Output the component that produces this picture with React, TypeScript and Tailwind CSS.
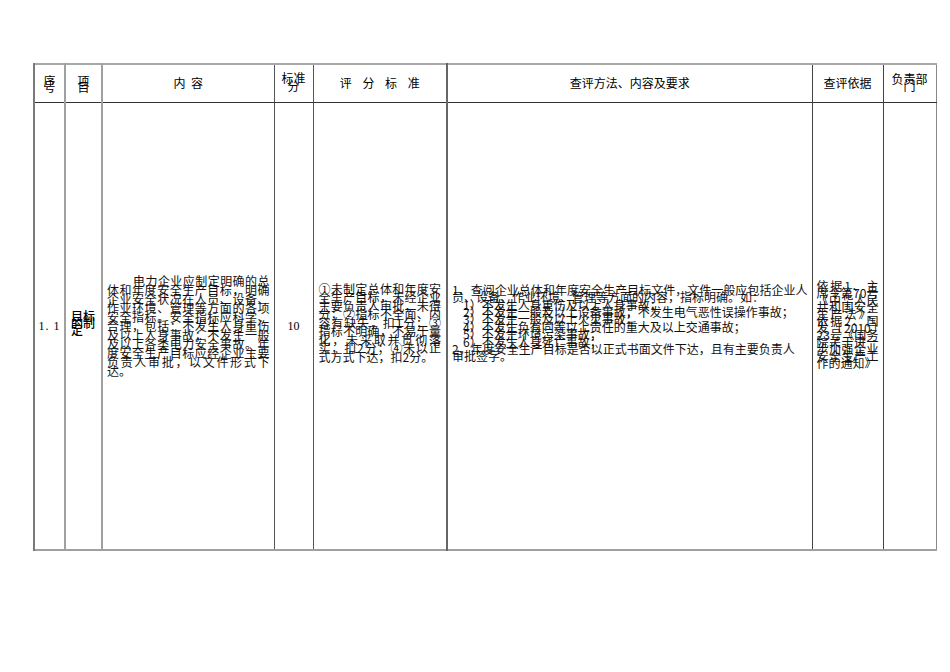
import React from "react";

const cjk = { fontFamily: '"Noto Sans CJK SC", "Noto Sans", sans-serif' };
const serif = { fontFamily: '"Liberation Serif", "Noto Sans CJK SC", serif' };

const items = [
  "1）不发生人身重伤及以上人身事故；",
  "2）不发生一般及以上设备事故；不发生电气恶性误操作事故；",
  "3）不发生一般及以上火灾事故；",
  "4）不发生负有同等以上责任的重大及以上交通事故；",
  "5）不发生环境污染事故；",
  "6）不发生人身死亡事故；",
];

const App = () => {
  return (
    <div className="w-[950px] h-[672px] bg-white text-black" style={cjk}>
      <div className="pt-[63px] pl-[33px]">
        <table className="table-fixed border-collapse w-[902px]">
          <colgroup>
            <col className="w-[31px]" />
            <col className="w-[37px]" />
            <col className="w-[172px]" />
            <col className="w-[39px]" />
            <col className="w-[134px]" />
            <col className="w-[365px]" />
            <col className="w-[71px]" />
            <col className="w-[53px]" />
          </colgroup>
          <thead>
            <tr className="h-[38px] text-[12px] border-t-2 border-t-[#a8a8a8]">
              <th className="font-normal border-l-2 border-l-[#7a7a7a] border-b border-b-[#333] align-middle">
                <div className="w-[13px] mx-auto leading-[6px] pt-[2px]">序号</div>
              </th>
              <th className="font-normal border-l-2 border-l-[#a0a0a0] border-b border-b-[#333] align-middle">
                <div className="w-[13px] mx-auto leading-[6px] pt-[2px]">项目</div>
              </th>
              <th className="font-normal border-l-2 border-l-[#a0a0a0] border-b border-b-[#333] align-middle">
                <span className="whitespace-pre">内  容</span>
              </th>
              <th className="font-normal border-l border-l-[#555] border-b border-b-[#333] align-middle">
                <div className="w-[26px] mx-auto leading-[8px] pb-[2px]">标准分</div>
              </th>
              <th className="font-normal border-l border-l-[#555] border-b border-b-[#333] align-middle">
                <span className="tracking-[4px] pl-[4px]">评 分 标 准</span>
              </th>
              <th className="font-normal border-l-2 border-l-[#666] border-b border-b-[#333] align-middle">
                查评方法、内容及要求
              </th>
              <th className="font-normal border-l border-l-[#444] border-b border-b-[#333] align-middle">
                查评依据
              </th>
              <th className="font-normal border-l border-l-[#444] border-r border-r-[#888] border-b border-b-[#333] align-middle">
                <div className="w-[38px] mx-auto leading-[7px] pb-[2px]">负责部门</div>
              </th>
            </tr>
          </thead>
          <tbody>
            <tr className="h-[448px] border-b-2 border-b-[#a0a0a0]">
              <td className="border-l-2 border-l-[#7a7a7a] align-middle text-center text-[12px]" style={serif}>
                <span className="tracking-[1px]">1. 1</span>
              </td>
              <td className="border-l-2 border-l-[#a0a0a0] align-middle">
                <div className="w-[25px] mx-auto text-[12px] font-medium leading-[7px] pb-[6px]">目标的制定</div>
              </td>
              <td className="border-l-2 border-l-[#a0a0a0] align-middle px-[4px]">
                <p className="text-[12px] leading-[9px] text-justify indent-[26px] text-[#111]">
                  电力企业应制定明确的总体和年度安全生产目标，明确企业安全状况在人员、设备、作业环境、管理等方面的各项安全指标。安全指标应科学、合理，包括：不发生人身重伤及以上人身事故；不发生一般及以上各类电力安全事故。年度安全生产目标应经企业主要负责人审批，以文件形式下达。
                </p>
              </td>
              <td className="border-l border-l-[#555] align-middle text-center text-[12px]" style={serif}>
                10
              </td>
              <td className="border-l border-l-[#555] align-middle px-[5px]">
                <p className="text-[12px] leading-[8.5px] text-justify text-[#111] pb-[6px]">
                  ①未制定总体和年度安全生产目标，未经企业主要负责人审批，未得分；②指标不全面、内容有缺失，扣1分；③指标不明确，不易于量化，未采取并贯彻落实，扣2分；④未以正式方式下达，扣2分。
                </p>
              </td>
              <td className="border-l-2 border-l-[#666] align-middle px-[4px]">
                <div className="text-[12px] leading-[7.4px] text-justify text-[#111] pb-[6px]">
                  <p>1、查阅企业总体和年度安全生产目标文件，文件一般应包括企业人员、设备、作业环境、管理等方面的内容，指标明确。如：</p>
                  {items.map((t) => (
                    <p key={t} className="pl-[11px]">{t}</p>
                  ))}
                  <p>
                    2、年度安全生产目标是否以正式书面文件下达，且有主要负责人
                    <br />
                    审批签字。
                  </p>
                </div>
              </td>
              <td className="border-l border-l-[#444] align-middle px-[4px]">
                <p className="text-[12px] leading-[7px] text-justify text-[#111] pb-[4px]">
                  依据1、主席令第70号《中华人民共和国安全生产法》；依据2、国发〔2010〕23号《国务院关于进一步加强企业安全生产工作的通知》
                </p>
              </td>
              <td className="border-l border-l-[#444] border-r border-r-[#888] align-middle"></td>
            </tr>
          </tbody>
        </table>
      </div>
    </div>
  );
};

export default App;
